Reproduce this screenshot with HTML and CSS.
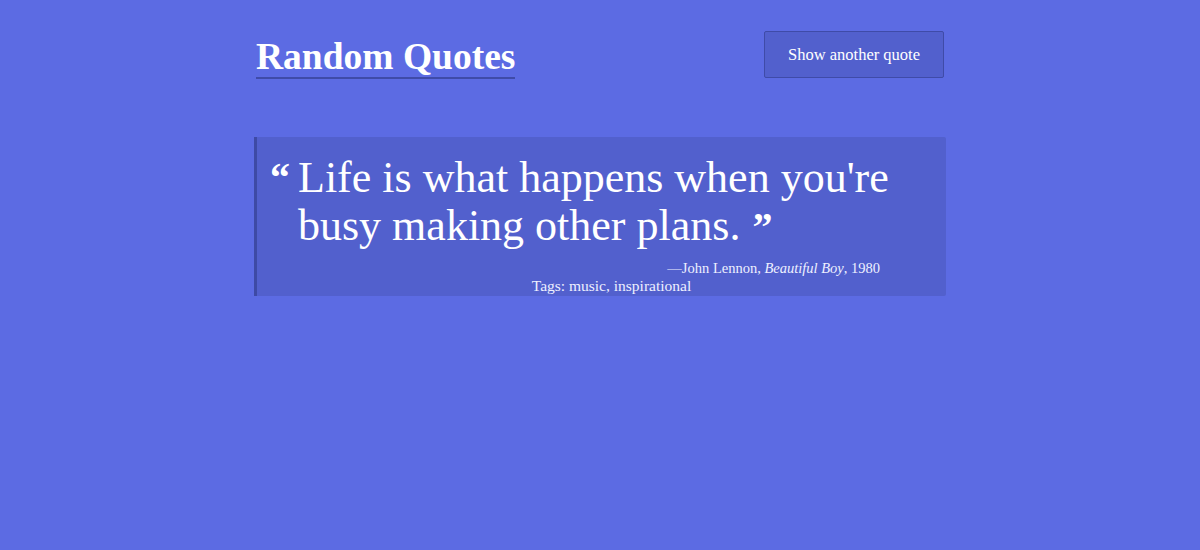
FILE: index.html
```html
<!DOCTYPE html>
<html lang="en">
<head>
<meta charset="utf-8">
<title>Random Quotes</title>
<link rel="stylesheet" href="styles.css">
</head>
<body>
<div class="container">
  <header class="header">
    <h1 class="title">Random Quotes</h1>
    <button class="btn">Show another quote</button>
  </header>
  <blockquote class="quote">
    <div class="quote-body">
      <span class="mark-open">&ldquo;</span>
      <p class="quote-text">Life is what happens when you're busy making other plans.<span class="mark-close">&rdquo;</span></p>
    </div>
    <div class="cite">&mdash;John Lennon, <em>Beautiful Boy</em>, 1980</div>
    <div class="tags">Tags: music, inspirational</div>
  </blockquote>
</div>
</body>
</html>
```
FILE: styles.css
```css
html, body {
  margin: 0;
  padding: 0;
}
body {
  background: #5c6be3;
  color: #ffffff;
  font-family: "Liberation Serif", "DejaVu Serif", serif;
  height: 550px;
}
.container {
  width: 692px;
  margin: 0 auto;
}
.header {
  display: flex;
  justify-content: space-between;
  align-items: flex-start;
  padding-top: 31px;
  padding-left: 2px;
  padding-right: 2px;
}
.title {
  margin: 5px 0 0 0;
  font-size: 37.5px;
  font-weight: bold;
  line-height: 41px;
  border-bottom: 2px solid #3f4ba8;
}
.btn {
  width: 180px;
  height: 47px;
  background: #5260cd;
  border: 1px solid #3f4ba8;
  border-radius: 2px;
  color: #ffffff;
  font-family: inherit;
  font-size: 16.5px;
  padding: 0;
}
.quote {
  margin: 58px 0 0 0;
  background: #5260cd;
  border-left: 3px solid #3e4aa5;
  padding: 17px 0 1px 0;
  border-radius: 0 2px 2px 0;
}
.quote-body {
  display: flex;
  align-items: flex-start;
  padding-left: 13px;
  padding-right: 30px;
}
.mark-open {
  font-size: 40px;
  line-height: 48px;
  width: 28px;
  font-weight: bold;
  flex: none;
}
.quote-text {
  margin: 0;
  font-size: 44px;
  line-height: 48px;
  width: 610px;
}
.mark-close {
  font-size: 40px;
  line-height: 40px;
  font-weight: bold;
  margin-left: 12px;
}
.cite {
  text-align: right;
  padding-right: 66px;
  font-size: 14.5px;
  line-height: 18px;
  margin-top: 9px;
  color: #eef0ff;
}
.tags {
  text-align: center;
  padding-left: 20px;
  font-size: 15.5px;
  line-height: 18px;
  color: #eef0ff;
}
```
